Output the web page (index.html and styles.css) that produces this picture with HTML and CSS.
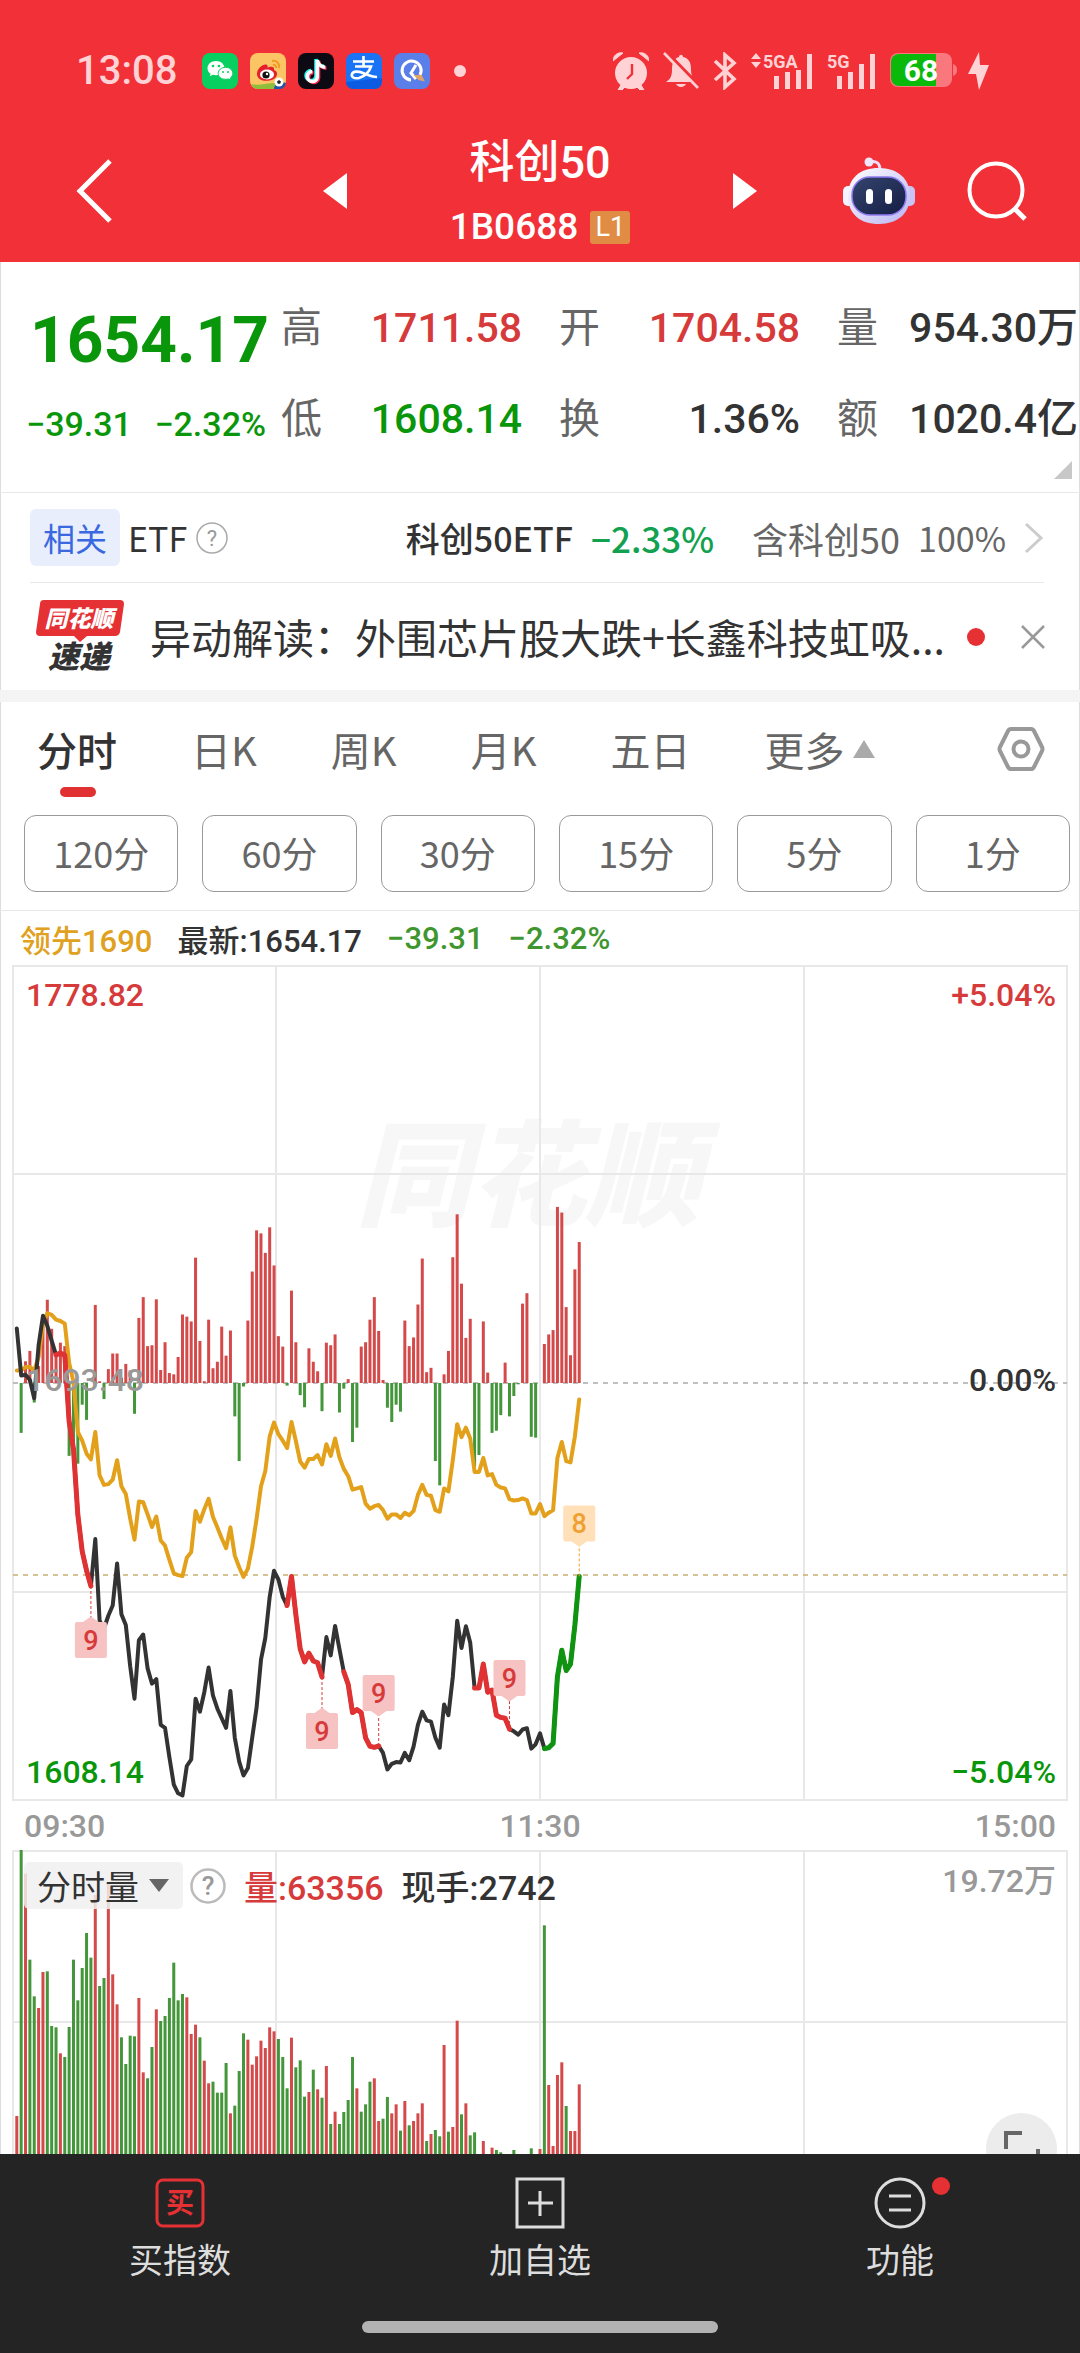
FILE: index.html
```html
<!DOCTYPE html>
<html lang="zh-CN">
<head>
<meta charset="UTF-8">
<meta name="viewport" content="width=device-width, initial-scale=1.0">
<title>科创50 1B0688</title>
<link rel="stylesheet" href="styles.css">
</head>
<body>

<header class="header">
    <div class="status">
        <span class="status-time">13:08</span>
        <div class="status-apps">
            <svg width="36" height="36" viewBox="0 0 36 36">
                <rect width="36" height="36" rx="8" fill="#07cf60"/>
                <path d="M14 8c-5 0-8.500 3.200-8.500 7.200 0 2.300 1.200 4.200 3.100 5.500l-.8 2.600 3-1.500c1 .3 2 .4 3.200.4 4.800 0 8.500-3 8.500-7S19 8 14 8z" fill="#fff"/>
                <path d="M23.500 14.300c4.200 0 7.300 2.700 7.300 6.100 0 1.900-1 3.500-2.500 4.600l.6 2.200-2.600-1.300c-.9.300-1.800.4-2.800.4-4.200 0-7.300-2.600-7.300-5.900s3.100-6.100 7.300-6.100z" fill="#fff" stroke="#07cf60"/>
                <g fill="#07cf60"><circle cx="11" cy="13" r="1.300"/><circle cx="17" cy="13" r="1.300"/><circle cx="21" cy="19" r="1"/><circle cx="26" cy="19" r="1"/></g>
            </svg>
            <svg width="36" height="36" viewBox="0 0 36 36">
                <rect width="36" height="36" rx="8" fill="#fbc566"/>
                <path d="M1 31c8 2 16-1 24-1l8 2c-2 3-4 4-6 4H8c-3 0-6-2-7-5z" fill="#8fbf3a"/>
                <path d="M7 21c0-6 7-11 10-9 1 1 1 2 0 3 3-2 8-2 7 2 3 1 4 4 2 7-3 5-19 6-19-3z" fill="#e3202b"/>
                <ellipse cx="17" cy="21.500" rx="7" ry="5" fill="#fff"/>
                <circle cx="16" cy="22" r="3.600" fill="#111"/><circle cx="17" cy="21" r="1.200" fill="#fff"/>
                <path d="M22 8c5-1 8 3 7 7M23 12c2-.5 3.500 1 3 3" fill="none" stroke="#f39b22" stroke-width="2"/>
                <path d="M24 36c0-5 6-8 12-6-1 4-3 6-7 6z" fill="#2455a8"/>
                <circle cx="29" cy="29" r="4.500" fill="#fff"/><path d="M29 27l2 1.500-.8 2.300h-2.400L27 28.500z" fill="#222"/>
            </svg>
            <svg width="36" height="36" viewBox="0 0 36 36">
                <rect width="36" height="36" rx="8" fill="#0d0a14"/>
                <g fill="none" stroke-width="3.600">
                    <path d="M18 6v17a5 5 0 1 1-5-5.500M18 6c.5 4 3.500 7 8 7.200" stroke="#25f4ee"/>
                    <path d="M20.500 8v17a5 5 0 1 1-5-5.500M20.500 8c.5 4 3.500 7 8 7.200" stroke="#fe2c55"/>
                    <path d="M19.300 7v17a5 5 0 1 1-5-5.500M19.300 7c.5 4 3.500 7 8 7.200" stroke="#fff"/>
                </g>
            </svg>
            <svg width="36" height="36" viewBox="0 0 36 36">
                <rect width="36" height="36" rx="8" fill="#1a73f5"/>
                <path d="M0 29l36-4v3c0 5-3 8-8 8H8c-5 0-8-3-8-7z" fill="#0d5be0"/>
                <g fill="none" stroke="#fff" stroke-width="2.600">
                    <path d="M7 8.500h21M17.500 3v10M9 13.500h16c-2 6-7 10-12 11.500-5 1-8-1-7-4s6-3 11-1 9 4 14 4"/>
                </g>
            </svg>
            <svg width="36" height="36" viewBox="0 0 36 36">
                <rect width="36" height="36" rx="8" fill="#5b7fe8"/>
                <path d="M17 27a9.500 9.500 0 1 1 9-5M22 12l-5 8 5 6" fill="none" stroke="#fff" stroke-width="3"/>
                <path d="M22 23l5 0 2 4-4-1z" fill="#e0a468" stroke="#e0a468" stroke-width="2"/>
            </svg>
            <i class="status-dot"></i>
        </div>
        <div class="status-icons">
            <svg class="alarm" width="36" height="38" viewBox="0 0 36 38">
                <circle cx="18" cy="21" r="16"/>
                <path d="M0 9a8 8 0 0 1 10-8zM36 9a8 8 0 0 0-10-8zM8 33l-3 5h4l3-3zM28 33l3 5h-4l-3-3z" stroke="#ffd3d5"/>
                <path d="M19 12v10l-5 5" fill="none" stroke="#f23037" stroke-width="2.400"/>
            </svg>
            <svg class="bell" width="36" height="38" viewBox="0 0 36 38">
                <path d="M3 30c5-3 6-7 6-13 0-7 3-11 7-12 0-3 4-3 4 0 6 1 8 6 8 12 0 5 1 10 5 13zM13 32h10c-2 4-8 4-10 0z"/>
                <path d="M3 0l34 35" stroke="#f23037" stroke-width="4"/>
                <path d="M1 1l34 35" stroke="#ffd3d5" stroke-width="2.600"/>
            </svg>
            <svg class="bluetooth" width="24" height="38" viewBox="0 0 24 38">
                <path d="M2 9l19 18-9 8V3l9 8L2 28" fill="none" stroke="#ffd3d5" stroke-width="3.600"/>
            </svg>
            <svg class="signal-a" width="62" height="38" viewBox="0 0 62 38">
                <path d="M5 1l5 6H0zM5 16l5-6H0z"/>
                <text x="12" y="16" class="net">5GA</text>
                <path d="M23 24h5v13h-5zM34 20h5v17h-5zM45 18h5v19h-5zM56 2h5v35h-5z"/>
            </svg>
            <svg class="signal-b" width="49" height="38" viewBox="0 0 49 38">
                <text x="0" y="16" class="net">5G</text>
                <path d="M10 24h5v13h-5zM21 20h5v17h-5zM32 12h5v25h-5zM43 2h5v35h-5z"/>
            </svg>
            <svg class="battery" width="67" height="35" viewBox="0 0 67 35">
                <rect width="62" height="34" rx="8" fill="#f8787e"/>
                <path d="M63 11c3 1 4 3 4 6s-1 5-4 6z" fill="#f8787e"/>
                <path d="M46 1v32H9a8 8 0 0 1-8-8V9a8 8 0 0 1 8-8z" fill="#0bb90b"/>
                <text x="31" y="28" class="level">68</text>
            </svg>
            <svg class="bolt" width="22" height="38" viewBox="0 0 22 38"><path d="M11 0L0 22h8l3 16L21 13h-9z"/></svg>
        </div>
    </div>
    <nav class="topnav">
        <div class="topnav-side">
            <button class="icon-btn back" aria-label="返回"><svg width="37" height="64" viewBox="0 0 37 64"><path d="M34 2L4 32l30 30" fill="none" stroke="#fff" stroke-width="5"/></svg></button>
        </div>
        <button class="icon-btn arrow" aria-label="上一个"><svg width="24" height="36" viewBox="0 0 24 36"><path d="M24 0v36L0 18z" fill="#fff"/></svg></button>
        <div class="title">
            <h1>科创50</h1>
            <p>1B0688 <span class="level-tag">L1</span></p>
        </div>
        <button class="icon-btn arrow" aria-label="下一个"><svg width="24" height="36" viewBox="0 0 24 36"><path d="M0 0v36l24-18z" fill="#fff"/></svg></button>
        <div class="topnav-side right">
            <button class="icon-btn" aria-label="助手">
                <svg width="72" height="68" viewBox="0 0 72 68">
                    <defs>
                        <linearGradient id="shell" x1="0" y1="0" x2="1" y2="1"><stop offset="0" stop-color="#fff"/><stop offset="1" stop-color="#b9b4f2"/></linearGradient>
                        <linearGradient id="face" x1="0" y1="0" x2="1" y2="1"><stop offset="0" stop-color="#35456e"/><stop offset="1" stop-color="#141d44"/></linearGradient>
                    </defs>
                    <path d="M26 5c7-2 11 1 11 8" fill="none" stroke="#eadff8" stroke-width="3"/>
                    <circle cx="26" cy="5" r="4.500" fill="#efe6fa"/>
                    <rect x="0" y="29" width="12" height="20" rx="5" fill="#f5f3ff"/><rect x="60" y="29" width="12" height="20" rx="5" fill="#c9c4f5"/>
                    <path d="M36 11c19 0 31 11 31 28S55 67 36 67 5 57 5 39s12-28 31-28z" fill="url(#shell)"/>
                    <rect x="9" y="20" width="54" height="38" rx="18" fill="url(#face)" stroke="#8f7bf0" stroke-width="1.500"/>
                    <rect x="23" y="32" width="7" height="15" rx="3.500" fill="#fff"/><rect x="42" y="32" width="7" height="15" rx="3.500" fill="#fff"/>
                </svg>
            </button>
            <button class="icon-btn" aria-label="搜索"><svg width="60" height="60" viewBox="0 0 60 60"><g fill="none" stroke="#fff" stroke-width="4"><circle cx="29" cy="29" r="26.500"/><path d="M48 48l10 10" stroke-width="5"/></g></svg></button>
        </div>
    </nav>
</header>

<main class="page">
    <section class="quote">
        <div class="quote-price">
            <strong>1654.17</strong>
            <p><span>−39.31</span><span>−2.32%</span></p>
        </div>
        <dl class="quote-stats">
            <div><dt>高</dt><dd class="up">1711.58</dd></div>
            <div><dt>开</dt><dd class="up">1704.58</dd></div>
            <div><dt>量</dt><dd>954.30万</dd></div>
            <div><dt>低</dt><dd class="down">1608.14</dd></div>
            <div><dt>换</dt><dd>1.36%</dd></div>
            <div><dt>额</dt><dd>1020.4亿</dd></div>
        </dl>
        <svg class="corner" width="18" height="18" viewBox="0 0 18 18"><path d="M18 0v18H0z" fill="#c8c8c8"/></svg>
    </section>

    <a class="etf" href="#etf">
        <span class="tag">相关</span>
        <span class="etf-label">ETF</span>
        <svg width="32" height="32" viewBox="0 0 32 32"><circle cx="16" cy="16" r="15" fill="none" stroke="#aaa" stroke-width="1.500"/><text x="16" y="24" class="help">?</text></svg>
        <span class="etf-name">科创50ETF</span>
        <span class="etf-change">−2.33%</span>
        <span class="etf-hold">含科创50</span>
        <span class="etf-ratio">100%</span>
        <svg width="20" height="32" viewBox="0 0 20 32"><path d="M2 2l15 14L2 30" fill="none" stroke="#ccc" stroke-width="3"/></svg>
    </a>

    <div class="news">
        <svg width="88" height="84" viewBox="0 -4 88 84">
            <path d="M8 1h76q4 0 4 4l-4 28q-1 4-5 4H51l-7 6-6-6H4q-4 0-4-4L4 5q0-4 4-4z" fill="#e53034"/>
            <text x="43" y="28" class="logo-top">同花顺</text>
            <text x="43" y="69" class="logo-bottom">速递</text>
        </svg>
        <a class="news-title" href="#news">异动解读：外围芯片股大跌+长鑫科技虹吸...</a>
        <i class="red-dot"></i>
        <button class="icon-btn" aria-label="关闭"><svg width="26" height="26" viewBox="0 0 26 26"><path d="M2 2l22 22M24 2L2 24" stroke="#999" stroke-width="2.500"/></svg></button>
    </div>

    <nav class="tabs">
        <button class="active">分时</button>
        <button>日K</button>
        <button>周K</button>
        <button>月K</button>
        <button>五日</button>
        <button>更多<svg width="22" height="18" viewBox="0 0 22 18"><path d="M11 0l11 18H0z" fill="#aaa"/></svg></button>
        <button class="settings" aria-label="设置"><svg width="48" height="46" viewBox="0 0 48 46"><g fill="none" stroke="#999" stroke-width="4"><path d="M14 3h20q2 0 3 2l8 16q1 2 0 4l-8 16q-1 2-3 2H14q-2 0-3-2L3 25q-1-2 0-4l8-16q1-2 3-2z"/><circle cx="24" cy="23" r="7.500"/></g></svg></button>
    </nav>

    <div class="periods">
        <button>120分</button>
        <button>60分</button>
        <button>30分</button>
        <button>15分</button>
        <button>5分</button>
        <button>1分</button>
    </div>

    <div class="legend">
        <span class="lead">领先1690</span>
        <span>最新:1654.17</span>
        <span class="fall">−39.31</span>
        <span class="fall">−2.32%</span>
    </div>

    <svg class="chart" id="price" viewBox="0 0 1080 836">
        <text x="528" y="252" class="watermark">同花顺</text>
        <path class="grid" d="M13 1h1054v834H13zM276 1v834M540 1v834M804 1v834M13 209h1054M13 627h1054"/>
        <path class="zero" d="M13 418h1054"/>
        <path class="last" d="M13 610h1054"/>
        <g id="strength"></g>
        <g id="lines"></g>
        <g id="marks"></g>
        <text x="26" y="41" class="label up">1778.82</text>
        <text x="26" y="426" class="label mid">1693.48</text>
        <text x="26" y="818" class="label down">1608.14</text>
        <text x="1056" y="41" class="label end up">+5.04%</text>
        <text x="1056" y="426" class="label end">0.00%</text>
        <text x="1056" y="818" class="label end down">−5.04%</text>
    </svg>

    <div class="axis"><span>09:30</span><span>11:30</span><span>15:00</span></div>

    <section class="volume">
        <svg class="chart" viewBox="0 0 1080 304">
            <path class="grid" d="M13 304V1h1054v303M276 1v303M540 1v303M804 1v303M13 172h1054"/>
            <g id="volume"></g>
        </svg>
        <div class="volume-head">
            <label class="picker">
                <select aria-label="指标"><option>分时量</option></select>
                <svg width="20" height="13" viewBox="0 0 20 13"><path d="M0 0h20L10 13z" fill="#666"/></svg>
            </label>
            <svg width="36" height="36" viewBox="0 0 36 36"><circle cx="18" cy="18" r="16.500" fill="none" stroke="#bbb" stroke-width="2.500"/><text x="18" y="27" class="help help-big">?</text></svg>
            <span class="up">量:63356</span>
            <span>现手:2742</span>
            <span class="volume-max">19.72万</span>
        </div>
        <button class="expand" aria-label="全屏"><svg width="36" height="36" viewBox="0 0 36 36"><path d="M2 18V2h16M34 18v16H18" fill="none" stroke="#666" stroke-width="4"/></svg></button>
    </section>
</main>

<footer class="footer">
    <div class="actions">
        <button>
            <svg width="52" height="52" viewBox="0 0 52 52"><rect x="3" y="3" width="46" height="46" rx="6" fill="none" stroke="#e53034" stroke-width="3"/><text x="26" y="36" class="buy">买</text></svg>
            买指数
        </button>
        <button>
            <svg width="52" height="52" viewBox="0 0 52 52"><path d="M3 2h46v48H3zM26 14v25M14 26h25" fill="none" stroke="#ddd" stroke-width="3"/></svg>
            加自选
        </button>
        <button class="has-dot">
            <svg width="52" height="52" viewBox="0 0 52 52"><circle cx="26" cy="26" r="24" fill="none" stroke="#ddd" stroke-width="3"/><path d="M15 19h22M15 33h22" stroke="#ddd" stroke-width="3"/></svg>
            功能
        </button>
    </div>
    <div class="home-bar"></div>
</footer>

<script src="chart.js"></script>
</body>
</html>
```
FILE: styles.css
```css
* {
    box-sizing: border-box;
}
body {
    margin: 0;
    font-family: Roboto, "Noto Sans CJK SC", sans-serif;
    color: #333;
    background: #fff;
}
h1, p, dl, dd {
    margin: 0;
}
button, select {
    font-family: inherit;
    color: inherit;
    padding: 0;
    border: none;
    background: none;
}
svg {
    display: block;
    flex: none;
}
a {
    color: inherit;
    text-decoration: none;
}
.up {
    color: #d63a3a;
    fill: #d63a3a;
}
.down {
    color: #0a960a;
    fill: #0a960a;
}

/* Cabecera roja */
.header {
    background: #f23037;
    color: #fff;
}
.status {
    display: flex;
    align-items: center;
    height: 131px;
    padding: 10px 90px 0 76px;
    color: #ffd3d5;
}
.status-time {
    font-size: 40px;
    font-weight: 500;
}
.status-apps {
    display: flex;
    align-items: center;
    gap: 12px;
    margin-left: 25px;
}
.status-dot {
    width: 12px;
    height: 12px;
    margin-left: 12px;
    border-radius: 50%;
    background: #ffd3d5;
}
.status-icons {
    display: flex;
    align-items: center;
    gap: 14px;
    margin-left: auto;
    fill: #ffd3d5;
}
.battery {
    margin-right: -3px;
}
.net {
    font-size: 18px;
    font-weight: 700;
}
.level {
    font-size: 30px;
    font-weight: 700;
    fill: #fff;
    text-anchor: middle;
}
.topnav {
    display: flex;
    height: 131px;
    padding: 0 53px;
}
.topnav-side {
    flex: 1 0 0;
    display: flex;
    align-items: center;
    gap: 52px;
    height: 119px;
}
.topnav-side.right {
    justify-content: flex-end;
}
.icon-btn {
    display: block;
    cursor: pointer;
}
.back {
    margin-left: 23px;
}
.arrow {
    height: 119px;
}
.title {
    width: 386px;
    text-align: center;
    line-height: 64px;
}
.title h1 {
    font-size: 45px;
    font-weight: 500;
    line-height: 64px;
}
.title p {
    display: flex;
    justify-content: center;
    align-items: center;
    gap: 12px;
    font-size: 37px;
    font-weight: 500;
}
.level-tag {
    width: 40px;
    line-height: 33px;
    font-size: 27px;
    font-weight: 400;
    border-radius: 3px;
    background: #e08c45;
}

.page {
    box-shadow: inset 1px 0 #ddd, inset -1px 0 #ddd;
}

/* Cotizacion */
.quote {
    position: relative;
    display: grid;
    grid-template-columns: 240px 1fr;
    gap: 15px;
    height: 231px;
    padding: 20px 2px 0 26px;
    border-bottom: 1px solid #e8e8e8;
}
.quote-price {
    color: #0a960a;
}
.quote-price strong {
    display: block;
    padding-left: 4px;
    font-size: 64px;
    font-weight: 700;
    line-height: 117px;
}
.quote-price p {
    display: flex;
    justify-content: space-between;
    font-size: 34px;
    font-weight: 500;
    line-height: 50px;
}
.quote-stats {
    display: grid;
    grid-template-columns: 1fr 1fr 1fr;
    grid-auto-rows: 91px;
    column-gap: 37px;
}
.quote-stats div {
    display: flex;
    align-items: center;
    justify-content: space-between;
    line-height: 48px;
    white-space: nowrap;
}
.quote-stats dt {
    font-size: 41px;
    color: #666;
}
.quote-stats dd {
    font-size: 41px;
    font-weight: 500;
}
.corner {
    position: absolute;
    right: 8px;
    bottom: 13px;
}

/* ETF relacionado */
.etf {
    display: flex;
    align-items: center;
    height: 90px;
    margin: 0 36px 0 30px;
    border-bottom: 1px solid #e8e8e8;
    font-family: "Noto Sans CJK SC", sans-serif;
    font-size: 34px;
    white-space: nowrap;
}
.tag {
    margin-right: 8px;
    padding: 0 13px;
    line-height: 57px;
    font-size: 32px;
    color: #3a68e0;
    background: #e8eefc;
    border-radius: 6px;
}
.etf-label {
    margin-right: 9px;
}
.help {
    font-family: Roboto, sans-serif;
    font-size: 22px;
    fill: #999;
    text-anchor: middle;
}
.help-big {
    font-size: 26px;
}
.etf-name {
    margin-left: auto;
    margin-right: 18px;
    font-weight: 500;
}
.etf-change {
    margin-right: 38px;
    font-size: 35px;
    font-weight: 500;
    color: #12a150;
}
.etf-hold {
    margin-right: 18px;
    font-size: 36px;
    color: #666;
}
.etf-ratio {
    margin-right: 18px;
    color: #666;
}

/* Noticia */
.news {
    display: flex;
    align-items: center;
    height: 119px;
    padding: 0 34px 0 36px;
    border-bottom: 12px solid #f4f4f4;
}
.logo-top, .logo-bottom {
    font-family: "Noto Sans CJK SC", sans-serif;
    font-style: italic;
    font-weight: 900;
    text-anchor: middle;
}
.logo-top {
    font-size: 23px;
    fill: #fff;
}
.logo-bottom {
    font-size: 31px;
    fill: #333;
}
.news-title {
    flex: 1;
    margin: 0 6px 0 26px;
    padding-bottom: 2px;
    font-family: "Noto Sans CJK SC", sans-serif;
    font-size: 41px;
    line-height: 60px;
    white-space: nowrap;
}
.red-dot {
    flex: none;
    width: 18px;
    height: 18px;
    margin-right: 35px;
    border-radius: 50%;
    background: #e53034;
}

/* Pestanas */
.tabs {
    display: flex;
    align-items: flex-start;
    gap: 74px;
    height: 113px;
    padding: 17px 35px 0 37px;
    color: #666;
}
.tabs button {
    position: relative;
    display: flex;
    align-items: center;
    gap: 8px;
    height: 60px;
    font-family: "Noto Sans CJK SC", sans-serif;
    font-size: 40px;
    white-space: nowrap;
    cursor: pointer;
}
.tabs .active {
    color: #333;
    font-weight: 500;
}
.tabs .active::after {
    content: "";
    position: absolute;
    left: 23px;
    bottom: -18px;
    width: 36px;
    height: 10px;
    border-radius: 5px;
    background: #e03232;
}
.tabs .settings {
    margin-left: auto;
}
.periods {
    display: grid;
    grid-template-columns: repeat(6, 1fr);
    gap: 24px;
    padding: 0 10px 18px 24px;
    border-bottom: 1px solid #e8e8e8;
}
.periods button {
    height: 77px;
    padding-bottom: 4px;
    font-family: "Noto Sans CJK SC", sans-serif;
    font-size: 36px;
    color: #666;
    border: 1px solid #999;
    border-radius: 12px;
    cursor: pointer;
}

/* Graficos */
.legend {
    display: flex;
    align-items: center;
    gap: 25px;
    height: 54px;
    padding: 0 20px;
    font-size: 31px;
    font-weight: 500;
}
.lead {
    color: #e0a020;
}
.fall {
    color: #3f962f;
}
.chart {
    width: 100%;
    height: auto;
}
.grid {
    fill: none;
    stroke: #e8e8e8;
    stroke-width: 2;
}
.zero, .last {
    stroke: #aaa;
    stroke-width: 1.5;
    stroke-dasharray: 5 5;
}
.last {
    stroke: #c9b070;
}
.watermark {
    font-family: "Noto Sans CJK SC", sans-serif;
    font-size: 115px;
    font-weight: 900;
    font-style: italic;
    fill: #f7f7f7;
    text-anchor: middle;
}
.label {
    font-size: 32px;
    font-weight: 500;
}
.label:not(.up):not(.down) {
    fill: #333;
}
.label.mid {
    fill: #999 !important;
}
.end {
    text-anchor: end;
}
.line {
    fill: none;
    stroke-width: 4;
    stroke-linejoin: round;
    stroke-linecap: round;
}
.line-bold {
    stroke-width: 5;
}
.mark {
    font-size: 27px;
    font-weight: 500;
    text-anchor: middle;
}
.axis {
    display: flex;
    justify-content: space-between;
    padding: 2px 24px 0;
    line-height: 47px;
    font-size: 32px;
    font-weight: 500;
    color: #999;
}
.volume {
    position: relative;
    overflow: hidden;
}
.volume-head {
    position: absolute;
    top: 12px;
    left: 24px;
    right: 24px;
    display: flex;
    align-items: center;
    height: 47px;
    font-size: 34px;
    font-weight: 500;
}
.volume-head > svg {
    margin: 0 18px 0 7px;
}
.volume-head > .up {
    margin-right: 18px;
}
.picker {
    display: flex;
    align-items: center;
    gap: 10px;
    height: 47px;
    padding: 0 14px 0 13px;
    border-radius: 5px;
    background: rgba(240, 240, 240, 0.85);
}
.picker select {
    appearance: none;
    font-family: "Noto Sans CJK SC", sans-serif;
    font-size: 34px;
    line-height: 47px;
}
.volume-max {
    margin-left: auto;
    align-self: flex-start;
    line-height: 38px;
    font-size: 32px;
    color: #999;
}
.expand {
    position: absolute;
    right: 23px;
    bottom: -30px;
    display: flex;
    align-items: center;
    justify-content: center;
    width: 71px;
    height: 71px;
    border-radius: 50%;
    background: #ececec;
}

/* Barra inferior */
.footer {
    height: 199px;
    padding-top: 23px;
    background: #242424;
    color: #ddd;
}
.actions {
    display: grid;
    grid-template-columns: 1fr 1fr 1fr;
}
.actions button {
    position: relative;
    display: flex;
    flex-direction: column;
    align-items: center;
    gap: 5px;
    font-family: "Noto Sans CJK SC", sans-serif;
    font-size: 34px;
    line-height: 50px;
    cursor: pointer;
}
.buy {
    font-size: 28px;
    font-weight: 700;
    fill: #e53034;
    text-anchor: middle;
}
.has-dot::after {
    content: "";
    position: absolute;
    top: 0;
    left: calc(50% + 32px);
    width: 18px;
    height: 18px;
    border-radius: 50%;
    background: #e53034;
}
.home-bar {
    width: 33%;
    height: 12px;
    margin: 37px auto 0;
    border-radius: 6px;
    background: #b2b2b2;
}
```
FILE: chart.js
```js
const NS = 'http://www.w3.org/2000/svg';
const RED = '#d44a4a';
const GREEN = '#44963a';
const STEP = 4.36;
const BASE = 418;
const UNIT = 0.4337;

// fuerza por minuto: positivo hacia arriba (rojo), negativo hacia abajo (verde)
const strength = [0, -115, 50, 74, -45, 39, 147, 192, 125, 62, 93, 85, -168, -160, -186, -50, -85, 0, 180, 4,
    -37, 32, 68, 68, 12, 44, 29, -71, 150, 198, 85, 87, 193, 30, 94, 23, 20, 60, 158, 153,
    142, 289, 97, 4, 146, 34, 49, 130, 63, 121, -77, -180, -8, 144, 257, 352, 345, 300, 359, 271,
    108, 84, -6, 213, 94, -28, -56, 80, 49, 27, -65, 93, 87, 112, -68, -13, 9, -136, -103, 84,
    94, 146, 198, 120, 7, -57, -90, -50, -66, 144, 85, 105, 181, 287, 25, 35, -180, -236, 20, 74,
    290, 389, 229, 104, 148, -193, -166, 142, 24, -115, -110, -74, 47, -77, -30, -3, 183, 207, -124, -126,
    0, 90, 112, 122, 406, 393, 175, 64, 262, 325];

// lineas: distancia desde el cierre anterior
const lead = [-29, -29, -37, -37, -29, -60, -137, -161, -157, -146, -143, -137, -47, -2, 113, 133, 163, 176, 113, 213,
    235, 233, 223, 178, 238, 256, 313, 361, 273, 275, 303, 332, 308, 363, 375, 408, 439, 443, 445, 403,
    390, 295, 320, 291, 267, 309, 333, 358, 381, 333, 398, 425, 447, 428, 378, 313, 238, 203, 123, 91,
    118, 133, 150, 90, 133, 181, 195, 175, 175, 166, 188, 141, 168, 128, 171, 198, 215, 246, 243, 240,
    278, 290, 284, 281, 293, 313, 303, 303, 311, 299, 305, 295, 258, 235, 258, 260, 293, 297, 243, 250,
    178, 95, 125, 103, 128, 205, 205, 173, 213, 210, 235, 241, 243, 268, 271, 270, 266, 270, 301, 301,
    279, 307, 299, 293, 173, 136, 180, 183, 123, 38];
const price = [-126, -17, -19, -7, 35, -87, -155, -132, -97, -65, -69, -64, 88, 153, 303, 388, 433, 468, 360, 548,
    566, 536, 513, 416, 533, 558, 653, 728, 593, 580, 658, 693, 683, 788, 795, 863, 926, 946, 951, 883,
    868, 728, 758, 713, 656, 721, 751, 773, 795, 710, 818, 873, 905, 888, 818, 748, 638, 588, 493, 433,
    453, 493, 513, 446, 533, 613, 643, 623, 641, 645, 678, 586, 628, 560, 613, 666, 695, 760, 753, 760,
    818, 838, 840, 837, 853, 891, 878, 874, 875, 853, 870, 838, 788, 758, 778, 781, 818, 841, 741, 766,
    678, 548, 611, 561, 598, 703, 703, 648, 713, 708, 766, 771, 773, 798, 803, 811, 799, 796, 843, 833,
    808, 843, 841, 831, 678, 616, 663, 648, 558, 446];

const volume = [114, -913, 841, -583, -473, 438, 546, -548, -384, -380, 302, -291, -381, -583, -461, -558, -663, -589, 777, -504,
    -528, 810, 539, 449, -350, -270, -355, -353, 468, 245, -227, -321, 434, -399, -414, -468, -574, -461, -480, 470,
    360, 388, -350, 280, 212, -217, -184, -184, -273, 122, -145, -249, -362, 343, 268, 293, 340, 318, 380, 368,
    -345, -291, -197, 349, -260, -281, -172, 186, -253, 194, -169, 264, -90, 127, -90, -126, -162, -291, 197, -127,
    -149, -217, 227, 99, -106, -171, 122, 149, -70, 159, -86, 99, 122, 152, -39, 60, -72, -53, 327, -67,
    81, 400, -119, 152, -56, -65, 0, 39, 0, 19, -12, -5, 0, 0, -12, 0, 0, 0, -17, 0,
    15, -686, 207, 24, 237, 275, -144, 69, 69, 209];

function xAt(i) {
    return 16.8 + i * STEP;
}

function add(parent, name, attrs, text) {
    const el = document.createElementNS(NS, name);
    for (const key in attrs) {
        el.setAttribute(key, attrs[key]);
    }
    if (text) {
        el.textContent = text;
    }
    parent.appendChild(el);
}

function drawLine(values, from, to, color, className) {
    const points = [];
    for (let i = from; i <= to; i++) {
        points.push(xAt(i).toFixed(1) + ',' + (BASE + values[i] * UNIT).toFixed(1));
    }
    const lines = document.getElementById('lines');
    add(lines, 'polyline', { class: className, points: points.join(' '), stroke: color });
}

// etiqueta con el contador; dir 1 = debajo del precio, -1 = encima
function drawMark(i, text, dir, box, color, gap) {
    const marks = document.getElementById('marks');
    const x = xAt(i);
    const y = BASE + price[i] * UNIT;
    const tip = y + dir * gap;
    const near = tip + dir * 5;
    const far = tip + dir * 37;
    add(marks, 'path', { d: `M${x} ${y}V${tip}`, stroke: color, 'stroke-dasharray': '3 2' });
    add(marks, 'path', { d: `M${x} ${tip}L${x + 7} ${near}H${x + 14}V${far}H${x - 14}V${near}H${x - 7}Z`, fill: box, stroke: box, 'stroke-width': 4, 'stroke-linejoin': 'round' });
    add(marks, 'text', { class: 'mark', x: x, y: (near + far) / 2 + 10, fill: color }, text);
}

const strengthGroup = document.getElementById('strength');
strength.forEach((v, i) => {
    const h = Math.abs(v) * UNIT;
    add(strengthGroup, 'rect', { x: xAt(i) - 1.5, y: v > 0 ? BASE - h : BASE, width: 3, height: h, fill: v > 0 ? RED : GREEN });
});

const volumeGroup = document.getElementById('volume');
volume.forEach((v, i) => {
    const h = Math.abs(v) / 3;
    add(volumeGroup, 'rect', { x: xAt(i) - 1.5, y: 304 - h, width: 3, height: h, fill: v > 0 ? RED : GREEN });
});

drawLine(lead, 0, 129, '#e3a01b', 'line');
drawLine(price, 0, 129, '#333', 'line');
[[9, 17], [62, 70], [75, 83], [105, 113]].forEach(([from, to]) => drawLine(price, from, to, '#e03232', 'line line-bold'));
drawLine(price, 121, 129, '#0f9412', 'line line-bold');

drawMark(17, '9', 1, '#f7c2c2', '#d63a3a', 33);
drawMark(70, '9', 1, '#f7c2c2', '#d63a3a', 33);
drawMark(83, '9', -1, '#f7c2c2', '#d63a3a', 32);
drawMark(113, '9', -1, '#f7c2c2', '#d63a3a', 30);
drawMark(129, '8', -1, '#ffe0b8', '#efa030', 32);
```
